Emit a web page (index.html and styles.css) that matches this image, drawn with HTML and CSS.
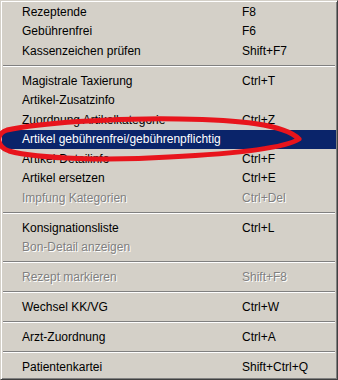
FILE: index.html
```html
<!DOCTYPE html>
<html lang="de">
<head>
    <meta charset="UTF-8">
    <title>Kontextmenü</title>
    <link rel="stylesheet" href="styles.css">
</head>
<body>
    <div class="menu">
        <div class="item"><span>Rezeptende</span><span>F8</span></div>
        <div class="item"><span>Gebührenfrei</span><span>F6</span></div>
        <div class="item"><span>Kassenzeichen prüfen</span><span>Shift+F7</span></div>
        <div class="separator"></div>
        <div class="item"><span>Magistrale Taxierung</span><span>Ctrl+T</span></div>
        <div class="item"><span>Artikel-Zusatzinfo</span><span></span></div>
        <div class="item"><span>Zuordnung Artikelkategorie</span><span>Ctrl+Z</span></div>
        <div class="item selected"><span>Artikel gebührenfrei/gebührenpflichtig</span><span></span></div>
        <div class="item"><span>Artikel-Detailinfo</span><span>Ctrl+F</span></div>
        <div class="item"><span>Artikel ersetzen</span><span>Ctrl+E</span></div>
        <div class="item disabled"><span>Impfung Kategorien</span><span>Ctrl+Del</span></div>
        <div class="separator"></div>
        <div class="item"><span>Konsignationsliste</span><span>Ctrl+L</span></div>
        <div class="item disabled"><span>Bon-Detail anzeigen</span><span></span></div>
        <div class="separator"></div>
        <div class="item disabled"><span>Rezept markieren</span><span>Shift+F8</span></div>
        <div class="separator"></div>
        <div class="item"><span>Wechsel KK/VG</span><span>Ctrl+W</span></div>
        <div class="separator"></div>
        <div class="item"><span>Arzt-Zuordnung</span><span>Ctrl+A</span></div>
        <div class="separator"></div>
        <div class="item"><span>Patientenkartei</span><span>Shift+Ctrl+Q</span></div>

        <!-- hand-drawn marker around the selected entry -->
        <svg class="marker" width="338" height="380" viewBox="0 0 338 380">
            <path d="M300,140 C285,125 240,121 180,120 C110,119 40,124 8,131 C-4,135 -2,148 10,152 C40,160 110,162 170,158 C230,155 285,150 300,140 Z"
                  fill="none" stroke="#e8141c" stroke-width="5" stroke-linejoin="round"/>
        </svg>
    </div>
</body>
</html>
```

FILE: styles.css
```css
body {
    margin: 0;
    padding: 0;
    background: #fff;
}

.menu {
    position: relative;
    box-sizing: border-box;
    width: 338px;
    height: 380px;
    padding: 1px 1px 0;
    background: #d4d0c8;
    border-top: 1px solid #d4d0c8;
    border-left: 1px solid #d4d0c8;
    border-right: 1px solid #404040;
    border-bottom: 1px solid #404040;
    box-shadow: inset 1px 1px 0 #fff, inset -1px -1px 0 #808080;
    font-family: "Liberation Sans", Arial, sans-serif;
    font-size: 12px;
    color: #000;
}

.item {
    display: grid;
    grid-template-columns: 1fr 94px;
    align-items: center;
    height: 19.5px;
    padding-left: 20px;
    white-space: nowrap;
}

.item.selected {
    background: #0a246a;
    color: #fff;
}

.item.disabled {
    color: #808080;
    text-shadow: 1px 1px 0 #fff;
}

.separator {
    height: 10.5px;
    margin: 0 1px;
    box-sizing: border-box;
    padding-top: 4px;
}

.separator::before {
    content: "";
    display: block;
    height: 1px;
    background: #808080;
    border-bottom: 1px solid #fff;
}

.marker {
    position: absolute;
    left: -2px;
    top: -2px;
    pointer-events: none;
}
```
